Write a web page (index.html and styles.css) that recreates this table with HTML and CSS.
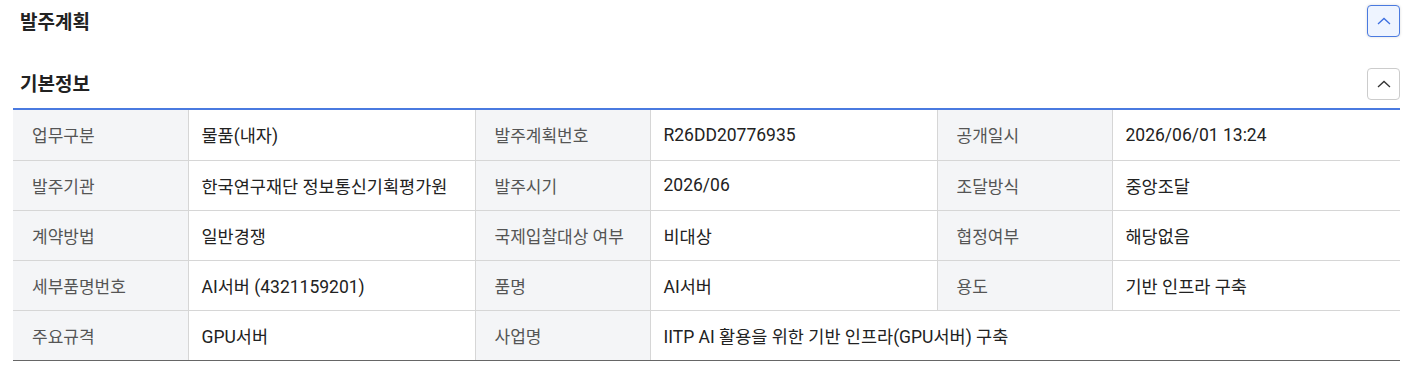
FILE: index.html
```html
<!DOCTYPE html>
<html lang="ko">
<head>
<meta charset="utf-8">
<link rel="stylesheet" href="styles.css">
</head>
<body>
<div class="page">
  <div class="section-head plan">
    <h2 class="title">발주계획</h2>
    <button class="toggle active" aria-label="접기">
      <svg width="14" height="8" viewBox="0 0 14 8"><polyline points="1,7 7,1.5 13,7" fill="none" stroke="currentColor" stroke-width="1.3"/></svg>
    </button>
  </div>
  <div class="section-head basic">
    <h2 class="title">기본정보</h2>
    <button class="toggle" aria-label="접기">
      <svg width="14" height="8" viewBox="0 0 14 8"><polyline points="1,7 7,1.5 13,7" fill="none" stroke="currentColor" stroke-width="1.3"/></svg>
    </button>
  </div>
  <table class="info">
    <colgroup>
      <col class="c-th"><col class="c-td"><col class="c-th"><col class="c-td"><col class="c-th3"><col>
    </colgroup>
    <tbody>
      <tr><th>업무구분</th><td>물품(내자)</td><th>발주계획번호</th><td>R26DD20776935</td><th>공개일시</th><td>2026/06/01 13:24</td></tr>
      <tr><th>발주기관</th><td>한국연구재단 정보통신기획평가원</td><th>발주시기</th><td>2026/06</td><th>조달방식</th><td>중앙조달</td></tr>
      <tr><th>계약방법</th><td>일반경쟁</td><th>국제입찰대상 여부</th><td>비대상</td><th>협정여부</th><td>해당없음</td></tr>
      <tr><th>세부품명번호</th><td>AI서버 (4321159201)</td><th>품명</th><td>AI서버</td><th>용도</th><td>기반 인프라 구축</td></tr>
      <tr><th>주요규격</th><td>GPU서버</td><th>사업명</th><td colspan="3">IITP AI 활용을 위한 기반 인프라(GPU서버) 구축</td></tr>
    </tbody>
  </table>
</div>
</body>
</html>
```

FILE: styles.css
```css
* { box-sizing: border-box; }
html, body { margin: 0; padding: 0; background: #fff; }
body {
  font-family: Roboto, "Noto Sans CJK KR", "Noto Sans", sans-serif;
  color: #222;
}
.page { padding: 0 12px 0 13px; }
.section-head {
  display: flex;
  align-items: center;
  justify-content: space-between;
}
.section-head.plan { height: 42px; }
.section-head.basic {
  height: 68px;
  align-items: flex-end;
  padding-bottom: 8px;
  border-bottom: 2px solid #4a7ae0;
}
.title {
  margin: 0 0 0 7px;
  font-size: 19px;
  font-weight: 700;
  color: #222;
  line-height: 1;
}
.section-head.plan .title { margin-top: 2px; }
.section-head.basic .title { margin-bottom: 6px; }
.toggle {
  width: 33px;
  height: 32px;
  border: 1px solid #ccc;
  border-radius: 4px;
  background: #fff;
  color: #333;
  display: flex;
  align-items: center;
  justify-content: center;
  padding: 0;
  cursor: pointer;
}
.toggle.active {
  border-color: #4a7ae0;
  background: #eef4ff;
  color: #3d6fe0;
  box-shadow: 0 0 3px rgba(0,0,0,0.15);
}
.info {
  width: 100%;
  border-collapse: collapse;
  table-layout: fixed;
  border-bottom: 1px solid #666;
}
.c-th { width: 175px; }
.c-td { width: 287px; }
.c-th3 { width: 175px; }
.info tr { height: 50px; }
.info th, .info td {
  font-weight: 400;
  text-align: left;
  border-bottom: 1px solid #d6d6d6;
  border-left: 1px solid #d6d6d6;
  vertical-align: middle;
  white-space: nowrap;
}
.info tr:last-child th, .info tr:last-child td { border-bottom: 1px solid #666; }
.info th:first-child { border-left: none; }
.info th {
  font-size: 17px;
  background: #f4f5f7;
  color: #555;
  padding: 0 0 0 19px;
}
.info td {
  font-size: 17.5px;
  color: #222;
  padding: 0 0 0 13px;
}
```
